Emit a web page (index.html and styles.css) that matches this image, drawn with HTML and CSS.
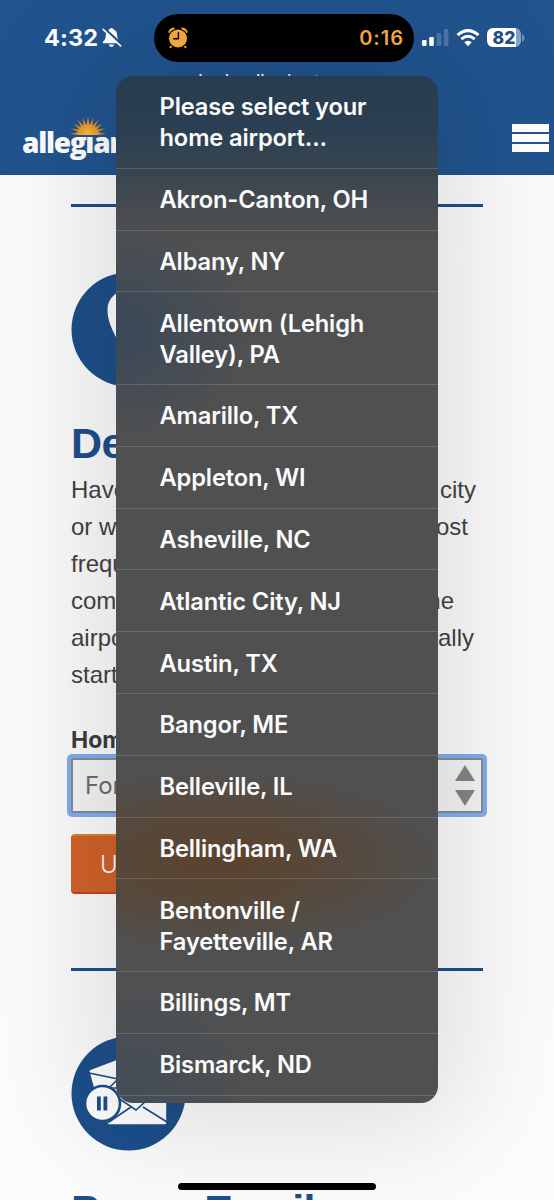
FILE: index.html
```html
<!DOCTYPE html>
<html lang="en">

<head>
    <meta charset="UTF-8">
    <meta name="viewport" content="width=device-width, initial-scale=1.0">
    <title>Allegiant - Email Preferences</title>
    <link rel="stylesheet" href="styles.css">
</head>

<body>

    <div class="screen">
        <header class="header">
            <!-- Phone status bar -->
            <div class="status-bar">
                <div class="status-left">
                    <span class="time">4:32</span>
                    <svg class="bell" width="20" height="21" viewBox="0 0 20 21">
                        <path d="M9.5 1C8.2 1 7.6 1.8 7.4 2.6C4.8 3.5 3.9 5.5 3.8 8.2C3.7 11.5 3 12.6 1.2 14.4C.3 15.4.7 16.3 1.8 16.3H17.2C18.3 16.3 18.7 15.4 17.8 14.4C16 12.6 15.3 11.5 15.2 8.2C15.1 5.5 14.2 3.5 11.6 2.6C11.4 1.8 10.8 1 9.5 1ZM6.8 17.4C7.1 19 8.1 19.8 9.5 19.8S11.9 19 12.2 17.4Z" fill="#fff" />
                        <path d="M2.4 1.6L19 17" stroke="#1f4e84" stroke-width="2.6" />
                        <path d="M1.2 2.4L18.6 18.8" stroke="#fff" stroke-width="1.7" stroke-linecap="round" />
                    </svg>
                </div>
                <div class="island">
                    <svg width="20" height="22" viewBox="0 0 20 22">
                        <g stroke="#f2a33a" stroke-linecap="round">
                            <path d="M1.8 4.6Q2.8 2.3 5.4 1.8M14.6 1.8Q17.2 2.3 18.2 4.6" stroke-width="2.8" fill="none" />
                            <path d="M4 18.5L2.4 20.4M16 18.5L17.6 20.4" stroke-width="1.8" />
                        </g>
                        <circle cx="10" cy="11.4" r="10" fill="#000" />
                        <circle cx="10" cy="11.4" r="9" fill="#f2a33a" />
                        <path d="M10.4 5.8V11.8H5.7" stroke="#000" stroke-width="1.4" fill="none" stroke-linecap="round" stroke-linejoin="round" />
                    </svg>
                    <span class="timer">0:16</span>
                </div>
                <div class="status-right">
                    <svg width="27" height="18" viewBox="0 0 27 18" fill="#fff">
                        <rect x="0" y="11" width="4.6" height="6" rx="1.2" />
                        <rect x="7.2" y="8" width="4.6" height="9" rx="1.2" />
                        <rect x="14.6" y="4" width="4.6" height="13" rx="1.2" opacity=".2" />
                        <rect x="21.8" y="0" width="4.6" height="17" rx="1.2" opacity=".2" />
                    </svg>
                    <svg class="wifi" width="24" height="18" viewBox="0 0 24 18" fill="none" stroke="#fff">
                        <path d="M1.5 6.2Q12 -3 22.5 6.2" stroke-width="3" />
                        <path d="M5.3 10.1Q12 4.5 18.7 10.1" stroke-width="2.9" />
                        <path d="M8.2 13.3Q12 10.2 15.8 13.3L12 17.2Z" fill="#fff" stroke="none" />
                    </svg>
                    <div class="battery"><span class="level">82</span></div>
                    <svg class="battery-tip" width="3" height="8" viewBox="0 0 3 8"><path d="M0 0Q2.6 1.4 2.6 4T0 8Z" fill="#6f92b8" /></svg>
                </div>
            </div>

            <div class="site-url">deals.allegiant.com</div>

            <div class="nav">
                <div class="logo">
                    <svg class="sun" width="36" height="20" viewBox="0 0 36 20">
                        <defs>
                            <radialGradient id="sunFill" cx="18" cy="19" r="18" gradientUnits="userSpaceOnUse">
                                <stop offset="0" stop-color="#f7c93c" />
                                <stop offset=".5" stop-color="#eda02d" />
                                <stop offset="1" stop-color="#b9752f" />
                            </radialGradient>
                        </defs>
                        <path d="M8 19L0 17.8L8.2 16L1 12.5L9.3 13.6L3.2 7.3L11.2 11.5L7.5 3.5L13.5 9.8L12.6 1.5L16.3 9L18 0L19.7 9L23.4 1.5L22.5 9.8L28.5 3.5L24.8 11.5L32.8 7.3L26.7 13.6L35 12.5L27.8 16L36 17.8L28 19Z" fill="url(#sunFill)" />
                    </svg>
                    <span class="logo-text">allegıant</span>
                </div>
                <div class="hamburger">
                    <span></span>
                    <span></span>
                    <span></span>
                </div>
            </div>
        </header>

        <main class="content">
            <hr class="rule">

            <svg class="round-icon" width="115" height="115" viewBox="0 0 115 115">
                <circle cx="57.5" cy="57.5" r="57" fill="#1d4f8a" />
                <path d="M57.5 18C45 18 36.5 27 36.5 38C36.5 56 50 70 57.5 92C65 70 78.5 56 78.5 38C78.5 27 70 18 57.5 18Z" fill="#fff" />
            </svg>

            <h1 class="title">De</h1>
            <div class="copy">
                <p><span>Have</span><span class="w405">city</span></p>
                <p><span>or w</span><span class="w398">ost</span></p>
                <p><span>frequ</span></p>
                <p><span>com</span><span class="w383">he</span></p>
                <p><span>airpo</span><span class="w403">ally</span></p>
                <p><span>start</span></p>
            </div>

            <label class="label">Hom</label>
            <div class="select">
                <span>For</span>
                <svg width="20" height="41" viewBox="0 0 20 41" fill="#858585">
                    <path d="M10 0L20 16H0Z" />
                    <path d="M0 25H20L10 41Z" />
                </svg>
            </div>
            <button class="update-btn">Up</button>

            <hr class="rule rule-bottom">

            <svg class="round-icon email-icon" width="115" height="115" viewBox="0 0 115 115">
                <circle cx="57.5" cy="57.5" r="57" fill="#1d4f8a" />
                <g fill="#fff" stroke="#1d4f8a" stroke-width="1.6">
                    <path d="M18 36Q17 34 20 33L75 12L86 52L26 66Z" />
                    <path d="M18 37L62 46L75 16M24 66L46 44" fill="none" />
                    <rect x="35" y="52" width="61" height="37" rx="2" />
                    <path d="M35 54L65 74L96 46M35 88L60 71M96 86L72 71" fill="none" />
                    <circle cx="31.5" cy="67.5" r="17.5" stroke-width="2.6" />
                </g>
                <path d="M26 60.5H29.8V74.5H26ZM32.5 60.5H36.3V74.5H32.5Z" fill="#1d4f8a" />
            </svg>
            <h1 class="title title-pause">Pause Email</h1>
        </main>

        <!-- Home airport picker -->
        <ul class="menu">
            <li>Please select your<br>home airport...</li>
            <li>Akron-Canton, OH</li>
            <li>Albany, NY</li>
            <li>Allentown (Lehigh<br>Valley), PA</li>
            <li>Amarillo, TX</li>
            <li>Appleton, WI</li>
            <li>Asheville, NC</li>
            <li>Atlantic City, NJ</li>
            <li>Austin, TX</li>
            <li>Bangor, ME</li>
            <li>Belleville, IL</li>
            <li>Bellingham, WA</li>
            <li>Bentonville /<br>Fayetteville, AR</li>
            <li>Billings, MT</li>
            <li>Bismarck, ND</li>
        </ul>

        <div class="home-bar"></div>
    </div>

</body>

</html>
```
FILE: styles.css
```css
* {
    margin: 0;
    padding: 0;
    box-sizing: border-box;
}

body {
    font-family: Inter, "Liberation Sans", sans-serif;
    background-color: #fcfcfc;
}

.screen {
    position: relative;
    width: 554px;
    height: 1200px;
    overflow: hidden;
}

/* Header */
.header {
    height: 175px;
    background-color: #21548f;
    color: white;
}

.status-bar {
    display: flex;
    height: 62px;
    padding-top: 14px;
}

.status-left {
    display: flex;
    align-items: center;
    width: 154px;
    height: 47px;
    padding-left: 44px;
    gap: 5px;
}

.time {
    width: 53px;
    font-size: 23.5px;
    font-weight: 700;
    letter-spacing: 0.1px;
}

.island {
    display: flex;
    align-items: center;
    justify-content: space-between;
    width: 260px;
    height: 48px;
    padding: 0 10px 0 14px;
    border-radius: 24px;
    background-color: black;
    position: relative;
    z-index: 3;
}

.timer {
    color: #f2a33a;
    font-size: 20px;
    font-weight: 600;
    letter-spacing: 1px;
}

.status-right {
    display: flex;
    align-items: center;
    padding-left: 8px;
    height: 47px;
    position: relative;
    z-index: 3;
}

.wifi {
    margin-left: 7px;
}

.battery {
    width: 34px;
    height: 19px;
    margin-left: 7px;
    border-radius: 6px;
    background: linear-gradient(90deg, white 84%, #86a3c4 84%);
    color: #1f4e84;
    text-align: center;
    line-height: 19px;
}

.level {
    font-size: 17.5px;
    font-weight: 800;
}

.battery-tip {
    margin-left: 1px;
}

.site-url {
    height: 37px;
    padding-top: 9px;
    text-align: center;
    font-family: "Liberation Sans", sans-serif;
    font-size: 20px;
    line-height: 23px;
}

.nav {
    display: flex;
    justify-content: space-between;
    padding: 17px 5px 0 22px;
}

.logo {
    position: relative;
    width: 120px;
    height: 48px;
}

.sun {
    position: absolute;
    left: 48px;
    top: 0;
}

.logo-text {
    position: relative;
    display: block;
    padding-top: 7px;
    font-family: "Open Sans", sans-serif;
    font-size: 28px;
    font-weight: 800;
    line-height: 38px;
    letter-spacing: -1.3px;
}

.hamburger {
    display: flex;
    flex-direction: column;
    gap: 2px;
    padding-top: 8px;
}

.hamburger span {
    width: 37px;
    height: 8px;
    background-color: white;
}

/* Page content */
.content {
    padding: 29px 71px 0;
}

.rule {
    height: 3px;
    border: none;
    background-color: #1d4f8a;
}

.round-icon {
    display: block;
    margin-top: 65px;
}

.title {
    margin-top: 31px;
    color: #1d4f8a;
    font-family: "Liberation Sans", sans-serif;
    font-size: 43px;
    line-height: 50px;
    letter-spacing: -0.5px;
    white-space: nowrap;
}

.title-pause {
    margin-top: 34px;
    letter-spacing: -0.9px;
}

.copy {
    margin-top: 3px;
    color: #434343;
    font-family: "Liberation Sans", sans-serif;
    font-size: 24px;
    line-height: 37px;
}

.copy p {
    display: grid;
    grid-template-columns: 60px 352px;
}

.copy span + span {
    text-align: right;
}

.w405 { width: 345px; }
.w403 { width: 343px; }
.w398 { width: 337px; }
.w383 { width: 323px; }

.label {
    display: block;
    margin-top: 31px;
    color: #3c3c3c;
    font-size: 23px;
    font-weight: 700;
    line-height: 32px;
}

.select {
    display: flex;
    align-items: center;
    justify-content: space-between;
    height: 55px;
    margin-top: 2px;
    padding: 0 6px 0 12px;
    border: 2px solid #858c96;
    outline: 4px solid #82adec;
    border-radius: 1px;
    background-color: #f5f5f5;
    color: #6c6c6c;
    font-size: 24px;
}

.update-btn {
    display: block;
    width: 288px;
    height: 60px;
    margin-top: 21px;
    padding-left: 29px;
    border: none;
    border-top: 2px solid #d98528;
    border-bottom: 2px solid #c9431f;
    border-radius: 4px;
    background-color: #d2622a;
    color: white;
    font-family: Inter, sans-serif;
    font-size: 24px;
    font-weight: 300;
    text-align: left;
}

.rule-bottom {
    margin-top: 74px;
}

.email-icon {
    margin-top: 65px;
}

/* Airport picker */
.menu {
    position: absolute;
    left: 116px;
    top: 76px;
    z-index: 2;
    width: 322px;
    height: 1027px;
    overflow: hidden;
    list-style: none;
    border-radius: 17px;
    color: #fafafa;
    font-size: 23.7px;
    font-weight: 600;
    line-height: 30.9px;
    letter-spacing: -0.15px;
    background:
        radial-gradient(ellipse 140px 110px at 0 254px, #394859 0%, rgba(57, 72, 89, 0) 100%),
        radial-gradient(ellipse 225px 90px at 100px 784px, #5a4430 15%, rgba(90, 68, 48, 0.55) 60%, rgba(90, 68, 48, 0) 100%),
        radial-gradient(ellipse 130px 110px at 15px 1010px, #444d57 0%, rgba(68, 77, 87, 0) 100%),
        linear-gradient(#283c50 0, #2b3f52 50px, #374550 95px, #494c50 135px, #505050 170px);
    box-shadow: 0 0 120px 28px rgba(0, 0, 0, 0.12);
}

.menu li {
    padding: 16.4px 20px 13.5px 43.5px;
    border-bottom: 1px solid rgba(255, 255, 255, 0.15);
    white-space: nowrap;
}

.home-bar {
    position: absolute;
    left: 178px;
    bottom: 10px;
    z-index: 3;
    width: 198px;
    height: 7px;
    border-radius: 4px;
    background-color: black;
}
```
